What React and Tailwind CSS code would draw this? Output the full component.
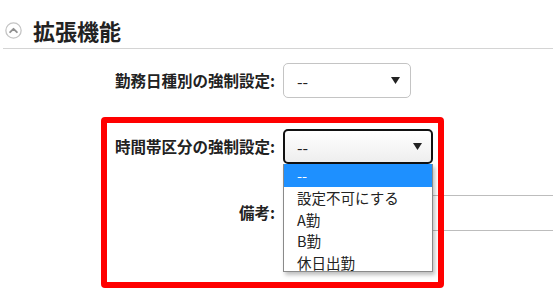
import React from "react";

const font = { fontFamily: '"Noto Sans CJK JP", "Noto Sans", sans-serif' };

function Arrow() {
  return (
    <svg width="9" height="7" viewBox="0 0 9 7">
      <path d="M0 0 L9 0 L4.5 7 Z" fill="#222" />
    </svg>
  );
}

export default function App() {
  return (
    <div
      className="relative w-[553px] h-[302px] bg-white overflow-hidden text-[#222]"
      style={font}
    >
      <div className="ml-[3px] h-[49px] pt-[12px] flex items-center border-b border-[#d4d4d4]">
        <svg width="17" height="17" viewBox="0 0 16 16" className="ml-[2px]">
          <circle cx="8" cy="8" r="7.2" fill="none" stroke="#c4c4c4" strokeWidth="1.2" />
          <path d="M4.8 9.6 L8 6.4 L11.2 9.6" fill="none" stroke="#8f8f8f" strokeWidth="1.7" strokeLinecap="round" strokeLinejoin="round" />
        </svg>
        <span className="ml-[11px] text-[22px] font-bold leading-none text-[#222]">拡張機能</span>
      </div>

      <div className="mt-[14px] flex flex-col gap-[31px]">
        <div className="flex items-center">
          <div className="w-[275px] text-right text-[15.5px] font-bold leading-none">勤務日種別の強制設定:</div>
          <div className="ml-[8px] w-[128px] h-[35px] border border-[#c4c4c4] rounded-[5px] flex items-center justify-between pl-[13px] pr-[10px] text-[16px]">
            <span>--</span>
            <Arrow />
          </div>
        </div>
        <div className="flex items-center">
          <div className="w-[275px] text-right text-[15.5px] font-bold leading-none">時間帯区分の強制設定:</div>
          <div className="ml-[8px] w-[150px] h-[35px] border-2 border-[#111] rounded-[5px] bg-gradient-to-b from-white to-[#eeeeee] flex items-center justify-between pl-[12px] pr-[9px] text-[16px]">
            <span>--</span>
            <Arrow />
          </div>
        </div>
        <div className="flex items-center">
          <div className="w-[275px] text-right text-[15.5px] font-bold leading-none">備考:</div>
          <div className="ml-[8px] flex-1 h-[36px] border border-r-0 border-[#bdbdbd] rounded-l-[3px]"></div>
        </div>
      </div>

      <div className="absolute left-[283px] top-[164px] w-[150px] h-[108px] bg-white border border-t-0 border-[#8a8a8a] shadow-[2px_3px_4px_rgba(0,0,0,0.25)] text-[14.5px] leading-[21.5px] text-[#222]">
        <div className="bg-[#1e90ff] text-white pl-[13px] h-[23px] leading-[23px]">--</div>
        <div className="pl-[13px]">設定不可にする</div>
        <div className="pl-[13px]">A勤</div>
        <div className="pl-[13px]">B勤</div>
        <div className="pl-[13px]">休日出勤</div>
      </div>

      <div className="absolute left-[101px] top-[117px] w-[343px] h-[171px] border-[6px] border-[#ff0000] rounded-[4px] pointer-events-none"></div>
    </div>
  );
}
